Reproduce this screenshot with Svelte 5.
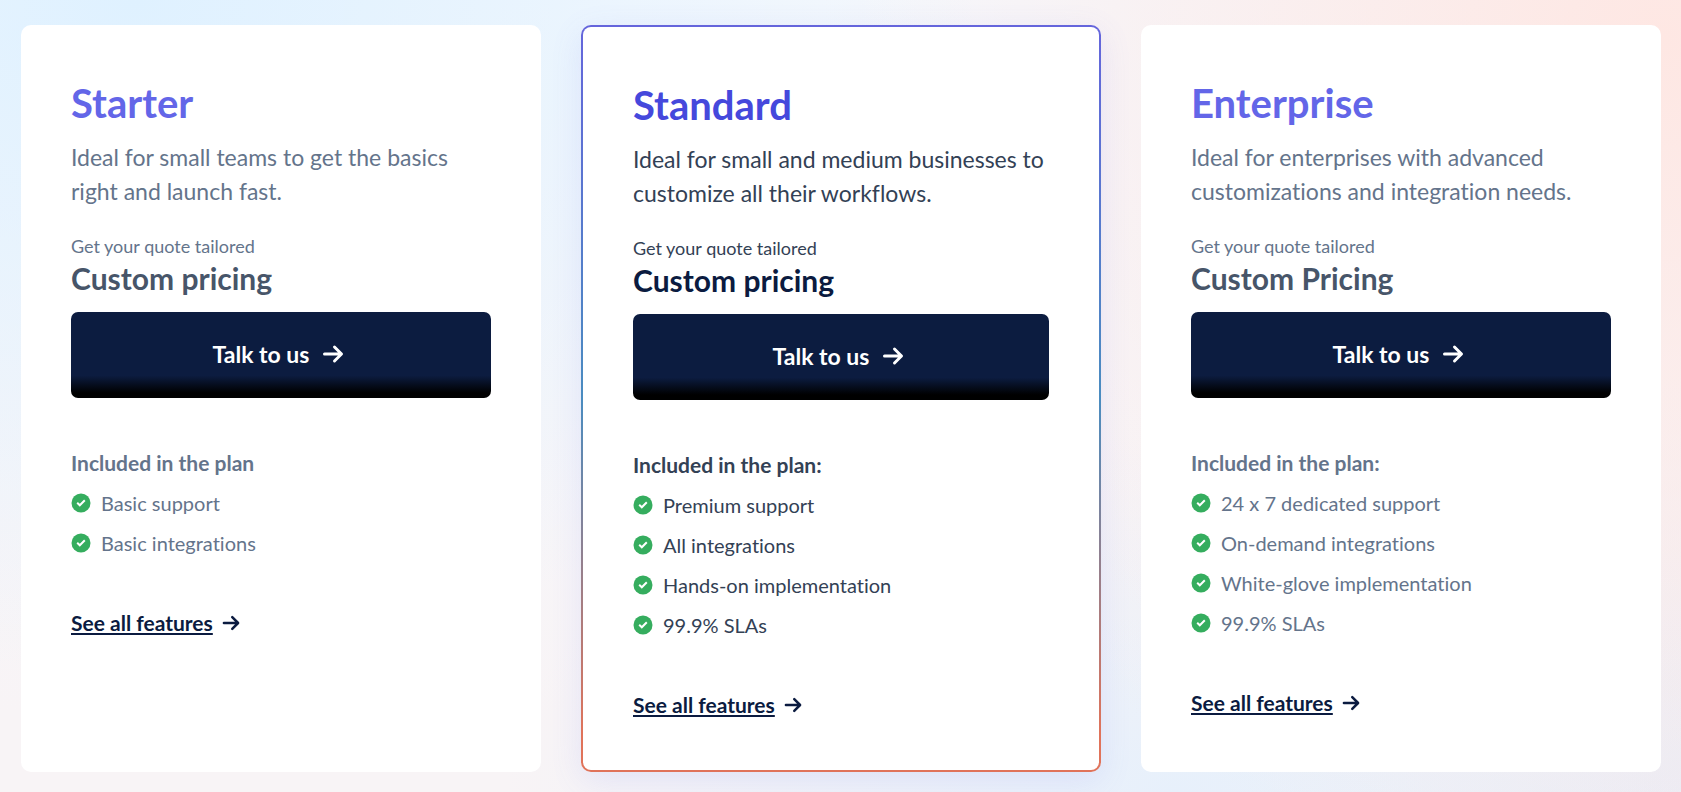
<script>
    const plans = [
        {
            name: 'Starter',
            description: 'Ideal for small teams to get the basics right and launch fast.',
            price: 'Custom pricing',
            listTitle: 'Included in the plan',
            features: ['Basic support', 'Basic integrations'],
            highlighted: false
        },
        {
            name: 'Standard',
            description: 'Ideal for small and medium businesses to customize all their workflows.',
            price: 'Custom pricing',
            listTitle: 'Included in the plan:',
            features: ['Premium support', 'All integrations', 'Hands-on implementation', '99.9% SLAs'],
            highlighted: true
        },
        {
            name: 'Enterprise',
            description: 'Ideal for enterprises with advanced customizations and integration needs.',
            price: 'Custom Pricing',
            listTitle: 'Included in the plan:',
            features: ['24 x 7 dedicated support', 'On-demand integrations', 'White-glove implementation', '99.9% SLAs'],
            highlighted: false
        }
    ];
</script>

{#snippet arrow()}
    <svg class="arrow" viewBox="0 0 24 24" aria-hidden="true">
        <path d="M3.500 12H20M13.500 5 20.500 12l-7 7" />
    </svg>
{/snippet}

<main class="pricing">
    {#each plans as plan}
        <section class="card" class:highlighted={plan.highlighted}>
            <h2>{plan.name}</h2>
            <p class="description">{plan.description}</p>

            <p class="quote">Get your quote tailored</p>
            <p class="price">{plan.price}</p>
            <button type="button">Talk to us {@render arrow()}</button>

            <h3>{plan.listTitle}</h3>
            <ul>
                {#each plan.features as feature}
                    <li>
                        <svg class="check" viewBox="0 0 20 20" aria-hidden="true">
                            <circle cx="10" cy="10" r="9.500" />
                            <path d="m6.200 9.800 2.600 2.500 5-5" />
                        </svg>
                        {feature}
                    </li>
                {/each}
            </ul>

            <a class="more" href="#features"><span>See all features</span>{@render arrow()}</a>
        </section>
    {/each}
</main>

<style>
    .pricing {
        box-sizing: border-box;
        min-height: 100vh;
        display: grid;
        grid-template-columns: repeat(3, 1fr);
        gap: 40px;
        padding: 25px 20px 20px 21px;
        font-family: Lato, 'Liberation Sans', sans-serif;
        font-variant-ligatures: none;
        /* soft glows in the corners */
        background:
            radial-gradient(ellipse 50% 85% at 8% 0%, #dff1ff, rgba(223, 241, 255, 0)),
            radial-gradient(ellipse 50% 110% at 99% 5%, #fee7e3, rgba(254, 231, 227, 0)),
            radial-gradient(ellipse 40% 45% at 70% 100%, #e7f0fb, rgba(231, 240, 251, 0)),
            radial-gradient(ellipse 30% 50% at 100% 100%, #ecebf3, rgba(236, 235, 243, 0)),
            linear-gradient(#f5f8fd, #f8f4f6 90%);
    }

    h2, h3, p, ul {
        margin: 0;
    }

    .card {
        padding: 50px 50px 48px;
        border-radius: 10px;
        background: white;
        color: #64748b;
    }

    h2 {
        margin-bottom: 9px;
        font-size: 40px;
        line-height: 56px;
        color: #6366e8;
    }

    .description {
        margin-bottom: 26px;
        font-size: 23px;
        line-height: 34px;
    }

    .quote {
        font-size: 18px;
        line-height: 24px;
    }

    .price {
        margin-bottom: 14px;
        font-size: 30px;
        font-weight: bold;
        line-height: 40px;
        color: #475569;
    }

    button {
        display: flex;
        justify-content: center;
        align-items: center;
        gap: 12px;
        width: 100%;
        height: 86px;
        margin-bottom: 53px;
        padding: 0 10px 2px 6px;
        border: none;
        border-radius: 7px;
        background: linear-gradient(#0c1c40 74%, #000 94%);
        color: white;
        font-family: inherit;
        font-size: 23px;
        font-weight: bold;
        cursor: pointer;
    }

    h3 {
        margin-bottom: 16px;
        font-size: 21px;
        line-height: 24px;
    }

    ul {
        display: grid;
        gap: 16px;
        margin-bottom: 56px;
        padding: 0;
        list-style: none;
    }

    li {
        display: flex;
        align-items: center;
        gap: 10px;
        font-size: 20px;
        line-height: 24px;
    }

    .check {
        width: 20px;
        height: 20px;
    }

    .check circle {
        fill: #35ad5e;
    }

    .check path {
        fill: none;
        stroke: white;
        stroke-width: 2;
    }

    .arrow {
        width: 24px;
        height: 24px;
        fill: none;
        stroke: currentColor;
        stroke-width: 3;
        stroke-linecap: round;
        stroke-linejoin: round;
    }

    .more {
        display: inline-flex;
        align-items: center;
        gap: 8px;
        font-size: 21px;
        font-weight: bold;
        line-height: 24px;
        color: #0b1b40;
        text-decoration: none;
    }

    .more span {
        text-decoration: underline;
        text-decoration-thickness: 2px;
        text-underline-offset: 2px;
    }

    .more .arrow {
        width: 20px;
        height: 20px;
    }

    .highlighted {
        border: 2px solid transparent;
        background:
            linear-gradient(white, white) padding-box,
            linear-gradient(#6565dc, #4a8cc0 50%, #e0735a 95%) border-box;
        box-shadow: 0 8px 32px rgba(99, 110, 241, 0.12);
        color: #334155;
    }

    .highlighted h2 {
        color: #4548dc;
    }

    .highlighted .price {
        color: #0b1b40;
    }
</style>
